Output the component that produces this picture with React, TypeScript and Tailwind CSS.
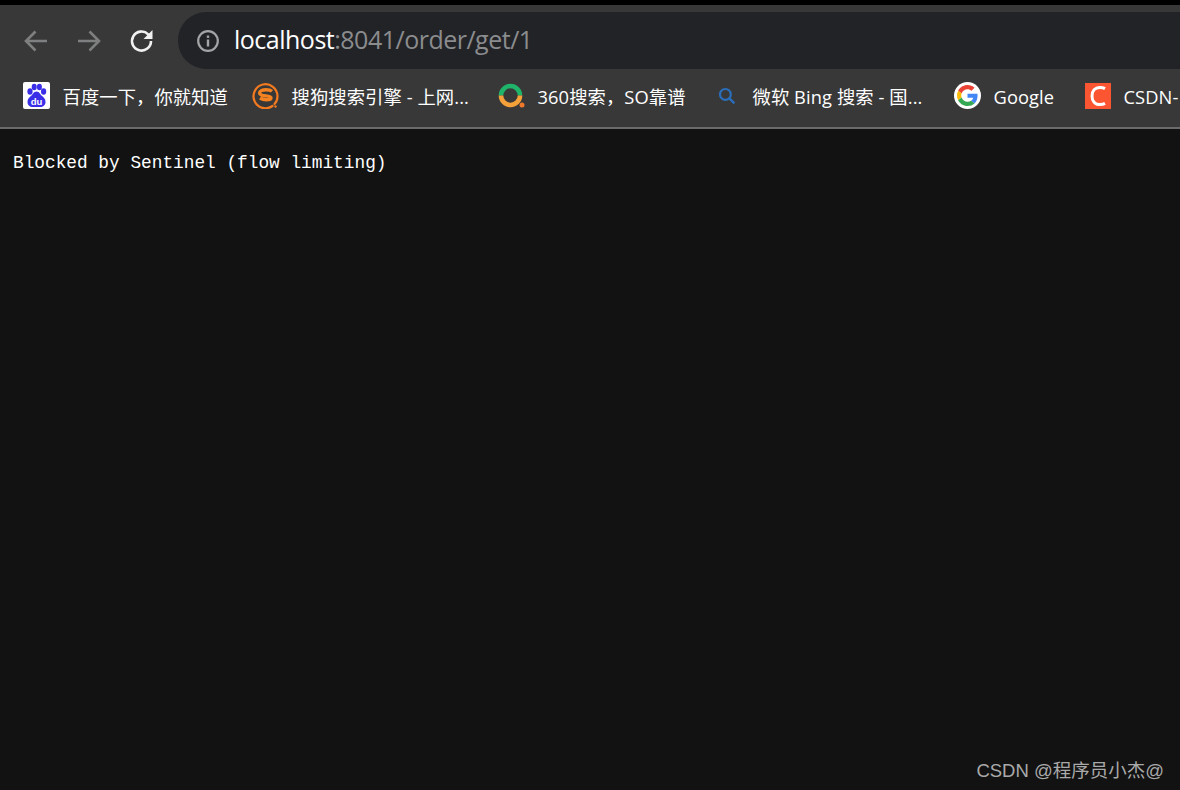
function BaiduIcon() {
  return (
    <svg width="27" height="27" viewBox="0 0 27 27">
      <rect width="27" height="27" rx="2" fill="#fff" />
      <ellipse cx="7" cy="9.500" rx="2.600" ry="3.200" fill="#3a2ee8" />
      <ellipse cx="11.200" cy="5" rx="2.500" ry="3.200" fill="#3a2ee8" />
      <ellipse cx="16.400" cy="5" rx="2.500" ry="3.200" fill="#3a2ee8" />
      <ellipse cx="20.600" cy="9.500" rx="2.600" ry="3.200" fill="#3a2ee8" />
      <path d="M13.500 9.500c-3 0-3.600 3-5.600 4.600C6 15.600 4.500 17 4.500 20c0 3.400 2.600 5 5.200 5h7.600c2.600 0 5.200-1.600 5.200-5 0-3-1.500-4.400-3.400-5.900-2-1.600-2.600-4.600-5.600-4.600z" fill="#3a2ee8" />
      <text x="13.500" y="22.800" textAnchor="middle" fontSize="9.500" fontWeight="700" fill="#fff" fontFamily="Liberation Sans, sans-serif">du</text>
    </svg>
  );
}

function SogouIcon() {
  return (
    <svg width="27" height="27" viewBox="0 0 27 27" fill="none">
      <path d="M20.500 24A12 12 0 1 1 25.500 14c0 3.400-1 6-3 8" stroke="#f47a20" strokeWidth="2.200" strokeLinecap="round" />
      <circle cx="23.500" cy="24.500" r="1.200" fill="#f47a20" />
      <path d="M20 9.200c-1.200-1-3.300-1.500-6-1.500-3.400 0-6.400 1-6.400 3.200 0 4.200 11.400 1.900 11.400 5 0 1.200-2 1.800-4.700 1.800-2.400 0-4.600-.6-6.300-1.700" stroke="#f58220" strokeWidth="3.400" />
    </svg>
  );
}

function So360Icon() {
  return (
    <svg width="27" height="27" viewBox="0 0 27 27" fill="none">
      <path d="M3 13.500a9.500 9.500 0 0 1 19 0" stroke="#1fb46a" strokeWidth="4.600" />
      <path d="M22 13.500a9.500 9.500 0 0 1-19 0" stroke="#f5a13a" strokeWidth="4.600" />
      <circle cx="24" cy="23" r="2.500" fill="#f0782a" />
    </svg>
  );
}

function BingIcon() {
  return (
    <svg width="18" height="18" viewBox="0 0 18 18" fill="none">
      <circle cx="7.400" cy="7.400" r="5.400" stroke="#2a6ebb" strokeWidth="2.200" />
      <path d="M11.400 11.400l5 5" stroke="#2a6ebb" strokeWidth="2.400" />
    </svg>
  );
}

function GoogleIcon() {
  return (
    <div className="w-[27px] h-[27px] rounded-full bg-white flex items-center justify-center">
      <svg width="21" height="21" viewBox="0 0 48 48">
        <path fill="#EA4335" d="M24 9.500c3.500 0 6.700 1.200 9.200 3.600l6.900-6.900C35.900 2.400 30.500 0 24 0 14.600 0 6.500 5.400 2.600 13.200l8 6.200C12.500 13.700 17.800 9.500 24 9.500z" />
        <path fill="#4285F4" d="M47 24.500c0-1.600-.1-3.100-.4-4.500H24v9h12.900c-.6 3-2.200 5.500-4.800 7.200l7.700 6c4.500-4.200 7.200-10.300 7.200-17.700z" />
        <path fill="#FBBC05" d="M10.600 28.600A14.500 14.500 0 0 1 9.800 24c0-1.600.3-3.100.8-4.600l-8-6.200A24 24 0 0 0 0 24c0 3.900.9 7.500 2.600 10.800l8-6.200z" />
        <path fill="#34A853" d="M24 48c6.500 0 11.900-2.100 15.900-5.800l-7.700-6c-2.200 1.400-4.900 2.300-8.200 2.300-6.200 0-11.500-4.200-13.400-9.900l-8 6.200C6.500 42.600 14.600 48 24 48z" />
      </svg>
    </div>
  );
}

function CsdnIcon() {
  return (
    <div className="w-[26px] h-[26px] bg-[#fc5531] flex items-center justify-center">
      <svg width="18" height="22" viewBox="0 0 18 22" fill="none">
        <path d="M16 3.600C14.600 2.800 13 2.400 11 2.400 6 2.400 3 6 3 11s3 8.600 8 8.600c2 0 3.600-.4 5-1.200" stroke="#fff" strokeWidth="3" />
      </svg>
    </div>
  );
}

const bookmarks = [
  { icon: <BaiduIcon />, title: "百度一下，你就知道", width: "w-[229px]" },
  { icon: <SogouIcon />, title: "搜狗搜索引擎 - 上网...", width: "w-[246px]" },
  { icon: <So360Icon />, title: "360搜索，SO靠谱", width: "w-[215px]" },
  { icon: <BingIcon />, title: "微软 Bing 搜索 - 国...", width: "w-[241px]" },
  { icon: <GoogleIcon />, title: "Google", width: "w-[130px]" },
  { icon: <CsdnIcon />, title: "CSDN-", width: "w-[96px]" },
];

export default function App() {
  return (
    <div className="w-[1180px] h-[790px] overflow-hidden bg-[#121212] relative flex flex-col">
      <div className="h-[5px] bg-black shrink-0" />
      <div className="h-[122px] bg-[#383838] shrink-0 flex flex-col">
        <div className="pt-[7px] h-[64px] flex items-start shrink-0">
          <div className="h-[57px] flex items-center pl-[22px] gap-[25px] w-[178px] shrink-0">
            <svg width="28" height="28" viewBox="0 0 28 28" fill="none" stroke="#7e7f81" strokeWidth="2.600">
              <path d="M25 14H4M13.500 4.500L4 14l9.500 9.500" />
            </svg>
            <svg width="28" height="28" viewBox="0 0 28 28" fill="none" stroke="#7e7f81" strokeWidth="2.600">
              <path d="M3 14h21M14.500 4.500L24 14l-9.500 9.500" />
            </svg>
            <svg width="28" height="28" viewBox="0 0 28 28" fill="none">
              <path d="M23 14a9.500 9.500 0 1 1-2.800-6.700L23 10" stroke="#f1f1f1" strokeWidth="2.600" />
              <path d="M24.500 3v9h-9z" fill="#f1f1f1" />
            </svg>
          </div>
          <div className="h-[57px] flex-1 rounded-l-[28px] bg-[#222327] flex items-center pl-[18px]">
            <svg width="24" height="24" viewBox="0 0 24 24" fill="none" className="shrink-0">
              <circle cx="12" cy="12" r="9.800" stroke="#a3a4a6" strokeWidth="2.200" />
              <rect x="10.800" y="10.500" width="2.400" height="7" fill="#a3a4a6" />
              <rect x="10.800" y="6.500" width="2.400" height="2.400" fill="#a3a4a6" />
            </svg>
            <span className="ml-[14px] -mt-[2px] text-[25px] tracking-[-0.5px] text-white leading-none font-['Open_Sans',sans-serif]">
              localhost<span className="text-[#8b8c8e]">:8041/order/get/1</span>
            </span>
          </div>
        </div>
        <div className="flex-1 flex items-start pt-[13px] pl-[23px]">
          {bookmarks.map((b) => (
            <div key={b.title} className={`flex items-center shrink-0 h-[27px] ${b.width}`}>
              <div className="w-[27px] h-[27px] flex items-center justify-center shrink-0">{b.icon}</div>
              <span className="ml-[12.500px] mt-[3px] text-[18.3px] tracking-[0.1px] leading-none text-white whitespace-nowrap font-['Open_Sans','Noto_Sans_CJK_SC',sans-serif]">
                {b.title}
              </span>
            </div>
          ))}
        </div>
      </div>
      <div className="h-[2px] bg-[#6b6b6b] shrink-0" />
      <pre className="pt-[23px] pl-[13px] text-[17.8px] leading-[22px] text-white font-['Liberation_Mono',monospace]">
        Blocked by Sentinel (flow limiting)
      </pre>
      <div className="absolute right-[16px] top-[758px] text-[18.5px] leading-[26px] text-[#a9a9a9] font-['Liberation_Sans','Noto_Sans_CJK_SC',sans-serif]">
        CSDN @程序员小杰@
      </div>
    </div>
  );
}
